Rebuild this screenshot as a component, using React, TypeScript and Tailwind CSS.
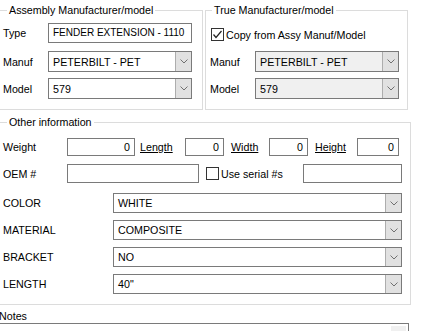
import React from "react";

function Chevron() {
  return (
    <svg width="8" height="5" viewBox="0 0 8 5" className="block">
      <polyline points="0.5,0.5 4,4 7.5,0.5" fill="none" stroke="#707070" strokeWidth="1" />
    </svg>
  );
}

function Combo({ value, disabled, h = "h-[21px]" }: { value: string; disabled?: boolean; h?: string }) {
  return (
    <div className={`flex flex-1 ${h} border border-[#7a7a7a] ${disabled ? "bg-[#f0f0f0]" : "bg-white"}`}>
      <div className="flex-1 flex items-center pl-[4px] whitespace-nowrap overflow-hidden">{value}</div>
      <div className="w-[16px] flex items-center justify-center bg-[#e1e1e1] border-l border-[#adadad]">
        <Chevron />
      </div>
    </div>
  );
}

function TextBox({
  value = "",
  w,
  h = "h-[20px]",
  right,
  extra = "",
}: {
  value?: string;
  w: string;
  h?: string;
  right?: boolean;
  extra?: string;
}) {
  return (
    <div
      className={`${w} ${h} border border-[#7a7a7a] bg-white flex items-center whitespace-nowrap overflow-hidden ${
        right ? "justify-end pr-[4px]" : "pl-[4px]"
      } ${extra}`}
    >
      {value}
    </div>
  );
}

function Check({ checked }: { checked?: boolean }) {
  return (
    <div className="w-[13px] h-[13px] border border-[#333] bg-white flex items-center justify-center">
      {checked && (
        <svg width="11" height="11" viewBox="0 0 11 11">
          <polyline points="1.5,5.5 4,8.5 9.5,2" fill="none" stroke="#222" strokeWidth="1.2" />
        </svg>
      )}
    </div>
  );
}

export default function App() {
  return (
    <div
      className="w-[423px] h-[331px] overflow-hidden bg-white text-black text-[10.7px] leading-[14px]"
      style={{ fontFamily: '"Liberation Sans", Arial, sans-serif' }}
    >
      <div className="flex pt-[3px]">
        {/* Assembly group */}
        <fieldset className="ml-[-4px] w-[207px] border border-[#dcdcdc] pl-[6px] pr-[10px] pb-[9px]">
          <legend className="ml-[4px] px-[2px]">Assembly Manufacturer/model</legend>
          <div className="flex items-center mt-[6px]">
            <span className="w-[45px]">Type</span>
            <TextBox value="FENDER EXTENSION - 1110" w="w-[144px]" extra="text-[10px]" />
          </div>
          <div className="flex items-center mt-[8px]">
            <span className="w-[45px]">Manuf</span>
            <Combo value="PETERBILT - PET" />
          </div>
          <div className="flex items-center mt-[6px]">
            <span className="w-[45px]">Model</span>
            <Combo value="579" />
          </div>
        </fieldset>

        {/* True group */}
        <fieldset className="ml-[2px] w-[203px] border border-[#dcdcdc] pl-[4px] pr-[8px] pb-[10px]">
          <legend className="ml-[2px] px-[2px]">True Manufacturer/model</legend>
          <div className="flex items-center mt-[11px] ml-[1px] h-[13px]">
            <Check checked />
            <span className="ml-[2px]">Copy from Assy Manuf/Model</span>
          </div>
          <div className="flex items-center mt-[10px]">
            <span className="w-[45px]">Manuf</span>
            <Combo value="PETERBILT - PET" disabled />
          </div>
          <div className="flex items-center mt-[6px]">
            <span className="w-[45px]">Model</span>
            <Combo value="579" disabled />
          </div>
        </fieldset>
      </div>

      {/* Other information */}
      <fieldset className="mt-[5px] ml-[-4px] w-[412px] border border-[#dcdcdc] pl-[6px] pr-[8px] pb-[10px]">
        <legend className="ml-[4px] px-[2px]">Other information</legend>
        <div className="flex items-center mt-[9px] h-[18px]">
          <span className="w-[64px]">Weight</span>
          <TextBox value="0" w="w-[68px]" h="h-[18px]" right />
          <span className="w-[50px] pl-[5px] underline">Length</span>
          <TextBox value="0" w="w-[39px]" h="h-[18px]" right />
          <span className="w-[45px] pl-[7px] underline">Width</span>
          <TextBox value="0" w="w-[39px]" h="h-[18px]" right />
          <span className="w-[49px] pl-[7px] underline">Height</span>
          <TextBox value="0" w="w-[42px]" h="h-[18px]" right />
        </div>
        <div className="flex items-center mt-[8px] h-[19px]">
          <span className="w-[64px]">OEM #</span>
          <TextBox w="w-[132px]" h="h-[19px]" />
          <div className="ml-[7px]">
            <Check />
          </div>
          <span className="ml-[2px] w-[82px]">Use serial #s</span>
          <TextBox w="w-[99px]" h="h-[19px]" />
        </div>
        {[
          ["COLOR", "WHITE"],
          ["MATERIAL", "COMPOSITE"],
          ["BRACKET", "NO"],
          ["LENGTH", '40"'],
        ].map(([label, value], i) => (
          <div key={label} className={`flex items-center ${i === 0 ? "mt-[10px]" : "mt-[7px]"}`}>
            <span className="w-[110px]">{label}</span>
            <Combo value={value} h="h-[20px]" />
          </div>
        ))}
      </fieldset>

      {/* Notes */}
      <div className="mt-[4px] ml-[-1px]">Notes</div>
      <div className="ml-[-2px] w-[411px] h-[40px] border border-[#7a7a7a] bg-white flex justify-end pr-[2px] pt-[2px]">
        <div className="w-[15px] h-[30px] bg-[#f0f0f0]" />
      </div>
    </div>
  );
}
